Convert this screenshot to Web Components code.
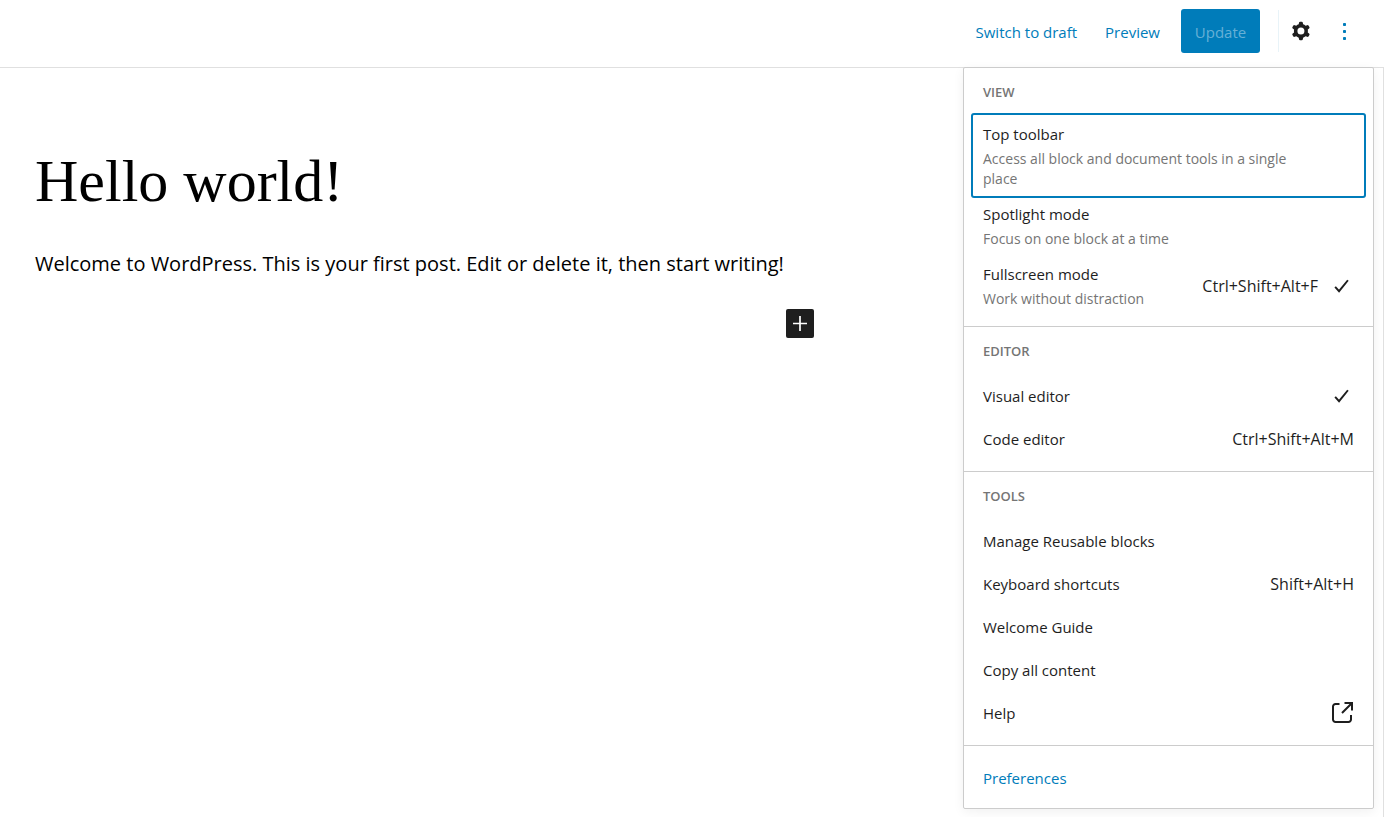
<!DOCTYPE html>
<html lang="en">
<head>
<meta charset="utf-8">
<meta name="viewport" content="width=device-width, initial-scale=1">
<title>Edit Post</title>
<style>
  html, body { margin: 0; }
  body { font-family: "Open Sans", "Noto Sans", sans-serif; font-size: 15px; color: #1e1e1e; background: #fff; --accent: #007cba; --line: #ccc; }
</style>
</head>
<body>
<post-editor>
  <editor-header slot="header"></editor-header>
  <editor-canvas></editor-canvas>
  <options-menu slot="menu">
    <menu-group label="View">
      <menu-item focused hint="Access all block and document tools in a single place">Top toolbar</menu-item>
      <menu-item hint="Focus on one block at a time">Spotlight mode</menu-item>
      <menu-item hint="Work without distraction" shortcut="Ctrl+Shift+Alt+F" icon="check">Fullscreen mode</menu-item>
    </menu-group>
    <menu-group label="Editor">
      <menu-item icon="check">Visual editor</menu-item>
      <menu-item shortcut="Ctrl+Shift+Alt+M">Code editor</menu-item>
    </menu-group>
    <menu-group label="Tools">
      <menu-item href="#blocks">Manage Reusable blocks</menu-item>
      <menu-item shortcut="Shift+Alt+H">Keyboard shortcuts</menu-item>
      <menu-item>Welcome Guide</menu-item>
      <menu-item>Copy all content</menu-item>
      <menu-item href="#help" icon="external">Help</menu-item>
    </menu-group>
    <menu-group>
      <menu-item accent>Preferences</menu-item>
    </menu-group>
  </options-menu>
</post-editor>

<script>
const ICONS = {
  check: '<svg width="26" height="26" viewBox="0 0 24 24" aria-hidden="true"><path d="M6.600 12.800l3.600 4L18.400 6.700" fill="none" stroke="currentColor" stroke-width="1.800"/></svg>',
  external: '<svg width="24" height="24" viewBox="0 0 24 24" aria-hidden="true"><g fill="none" stroke="currentColor" stroke-width="2"><path d="M9.500 3H5.500a2.500 2.500 0 0 0-2.500 2.500v13a2.500 2.500 0 0 0 2.500 2.500h13a2.500 2.500 0 0 0 2.500-2.500v-4.500"/><path d="M14.500 2H22v7.500M22 2L12 12"/></g></svg>'
};

class BaseElement extends HTMLElement {
  connectedCallback() {
    if (this.shadowRoot) return;
    this.attachShadow({ mode: 'open' }).innerHTML = this.render();
  }
}

customElements.define('post-editor', class extends BaseElement {
  render() {
    return `<style>
      :host { display: flex; flex-direction: column; min-height: 100vh; position: relative; }
      main { flex: 1; border-right: 1px solid #e0e0e0; }
      ::slotted([slot="menu"]) { position: absolute; top: 67px; right: 10px; }
    </style>
    <slot name="header"></slot>
    <main><slot></slot></main>
    <slot name="menu"></slot>`;
  }
});

customElements.define('editor-header', class extends BaseElement {
  render() {
    return `<style>
      :host { display: block; border-bottom: 1px solid #e0e0e0; }
      header { display: flex; justify-content: flex-end; align-items: center; padding: 9px 19px 14px; }
      button { font: inherit; line-height: 24px; margin: 0; border: 0; background: none; color: var(--accent); padding: 11px 14px 9px; border-radius: 3px; }
      .preview { margin-right: 7px; }
      .update { background: var(--accent); color: #66b0d6; width: 79px; padding: 11px 0 9px; }
      .tools { display: flex; margin-left: 18px; border-left: 1px solid #e8f3f8; gap: 4px; padding-left: 2px; }
      .tools button { width: 40px; height: 42px; padding: 0; display: grid; place-items: center; }
      .gear { color: #1e1e1e; }
      svg { display: block; }
    </style>
    <header>
      <button type="button">Switch to draft</button>
      <button type="button" class="preview">Preview</button>
      <button type="button" class="update" aria-disabled="true">Update</button>
      <div class="tools">
        <button type="button" class="gear" aria-label="Settings">
          <svg width="28" height="28" viewBox="0 0 24 24"><path fill="currentColor" fill-rule="evenodd" d="M10.289 4.836A1 1 0 0 1 11.275 4h1.306a1 1 0 0 1 .987.836l.244 1.466c.787.260 1.503.679 2.108 1.218l1.393-.522a1 1 0 0 1 1.216.437l.653 1.130a1 1 0 0 1-.230 1.273l-1.148.944a6.025 6.025 0 0 1 0 2.435l1.149.946a1 1 0 0 1 .230 1.272l-.653 1.130a1 1 0 0 1-1.216.437l-1.394-.522c-.605.540-1.320.958-2.108 1.218l-.244 1.466a1 1 0 0 1-.987.836h-1.306a1 1 0 0 1-.986-.836l-.244-1.466a5.995 5.995 0 0 1-2.108-1.218l-1.394.522a1 1 0 0 1-1.217-.436l-.653-1.131a1 1 0 0 1 .230-1.272l1.149-.946a6.026 6.026 0 0 1 0-2.435l-1.148-.944a1 1 0 0 1-.230-1.272l.653-1.131a1 1 0 0 1 1.217-.437l1.393.522a5.994 5.994 0 0 1 2.108-1.218l.244-1.466zM14.929 12a3 3 0 1 1-6 0 3 3 0 0 1 6 0z"/></svg>
        </button>
        <button type="button" aria-label="Options" aria-expanded="true">
          <svg width="24" height="24" viewBox="0 0 24 24" fill="currentColor"><rect x="10" y="4" width="3" height="3" rx=".8"/><rect x="10" y="11" width="3" height="3" rx=".8"/><rect x="10" y="18" width="3" height="3" rx=".8"/></svg>
        </button>
      </div>
    </header>`;
  }
});

customElements.define('editor-canvas', class extends BaseElement {
  render() {
    return `<style>
      :host { display: block; padding: 77px 35px 0; }
      article { max-width: 779px; display: flex; flex-direction: column; color: #000; }
      h1 { margin: 0; font: 300 60px/72px "Liberation Serif", serif; }
      p { margin: 29px 0 0; font-size: 20px; line-height: 36px; }
      button { align-self: flex-end; margin: 27px 0 0; width: 28px; height: 29px; padding: 0; border: 0; border-radius: 2px; background: #1e1e1e; color: #fff; display: grid; place-items: center; }
      svg { display: block; }
    </style>
    <article>
      <h1>Hello world!</h1>
      <p>Welcome to WordPress. This is your first post. Edit or delete it, then start writing!</p>
      <button type="button" aria-label="Add block"><svg width="28" height="29" viewBox="0 0 28 29"><path d="M14 7v15M7 14.500h14" stroke="currentColor" stroke-width="1.700"/></svg></button>
    </article>`;
  }
});

customElements.define('options-menu', class extends BaseElement {
  render() {
    return `<style>
      :host { display: block; box-sizing: border-box; width: 411px; max-width: 100%; background: #fff; border: 1px solid var(--line); border-radius: 2px; box-shadow: 0 3px 12px rgba(0,0,0,.06); }
    </style>
    <div role="menu" aria-label="Options"><slot></slot></div>`;
  }
});

customElements.define('menu-group', class extends BaseElement {
  render() {
    const label = this.getAttribute('label');
    return `<style>
      :host { display: block; padding: 12px 7px 11px; }
      :host(:first-child) { padding-bottom: 8px; }
      :host(:first-child) h2 { margin-bottom: 9px; }
      :host(:not(:first-child)) { border-top: 1px solid var(--line); }
      :host(:not([label])) { padding: 10px 7px 9px; }
      h2 { margin: 0 0 11px; padding: 0 12px; font-size: 13px; font-weight: 600; line-height: 24px; text-transform: uppercase; color: #757575; }
    </style>
    ${label ? `<h2>${label}</h2>` : ''}<slot></slot>`;
  }
});

customElements.define('menu-item', class extends BaseElement {
  render() {
    const hint = this.getAttribute('hint');
    const shortcut = this.getAttribute('shortcut');
    const icon = this.getAttribute('icon');
    const href = this.getAttribute('href');
    const tag = href ? 'a' : 'button';
    return `<style>
      :host { display: block; }
      .item { box-sizing: border-box; width: 100%; min-height: 43px; display: flex; align-items: center; margin: 0; padding: 0 12px; border: 0; border-radius: 3px; background: none; font: inherit; line-height: 24px; color: #1e1e1e; text-align: left; text-decoration: none; }
      :host([hint]) .item { padding: 4px 12px 9px; }
      :host([focused]) .item { padding: 9px 12px; box-shadow: inset 0 0 0 2px var(--accent); outline: none; }
      :host([accent]) .item { color: var(--accent); }
      .text { flex: 1; }
      .title, .hint { display: block; }
      .hint { margin-top: 3px; max-width: 310px; font-size: 14px; line-height: 20px; color: #757575; }
      .shortcut { font-size: 16px; }
      .icon { margin-left: 10px; }
      svg { display: block; }
    </style>
    <${tag} class="item" role="menuitem" ${href ? `href="${href}"` : 'type="button"'}>
      <span class="text"><span class="title"><slot></slot></span>${hint ? `<span class="hint">${hint}</span>` : ''}</span>
      ${shortcut ? `<span class="shortcut">${shortcut}</span>` : ''}
      ${icon ? `<span class="icon">${ICONS[icon]}</span>` : ''}
    </${tag}>`;
  }
});
</script>
</body>
</html>
